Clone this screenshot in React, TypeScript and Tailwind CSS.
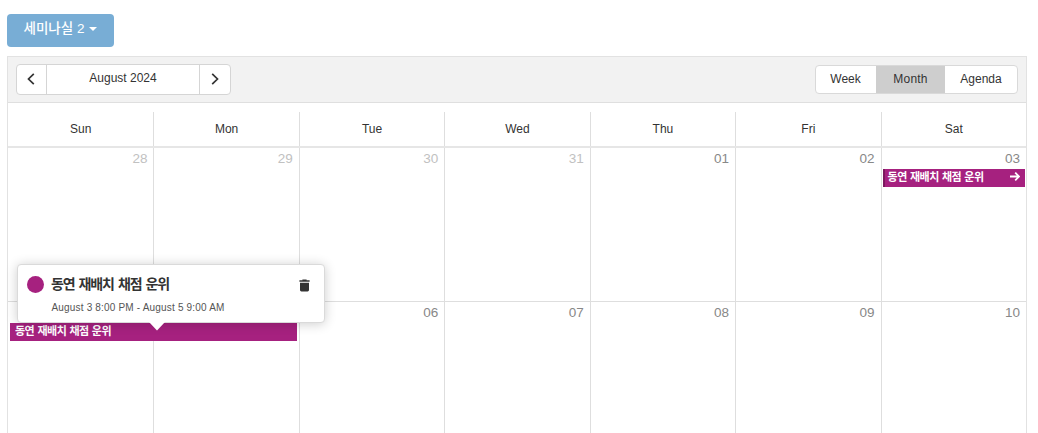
import clsx from "clsx"

type Day = { label: string; outside?: boolean; covered?: boolean }

const weekdays = ["Sun", "Mon", "Tue", "Wed", "Thu", "Fri", "Sat"]

const weeks: Day[][] = [
  [
    { label: "28", outside: true },
    { label: "29", outside: true },
    { label: "30", outside: true },
    { label: "31", outside: true },
    { label: "01" },
    { label: "02" },
    { label: "03" },
  ],
  [
    { label: "04", covered: true },
    { label: "05", covered: true },
    { label: "06" },
    { label: "07" },
    { label: "08" },
    { label: "09" },
    { label: "10" },
  ],
]

const EVENT_TITLE = "동연 재배치 채점 운위"

function Chevron({ direction }: { direction: "left" | "right" }) {
  return (
    <svg width="8" height="12" viewBox="0 0 8 12" fill="none" stroke="#333" strokeWidth="1.7">
      <path d={direction === "left" ? "M6.8 0.8L1.5 6l5.3 5.2" : "M1.2 0.8L6.5 6l-5.3 5.2"} />
    </svg>
  )
}

function Toolbar() {
  return (
    <div className="flex h-[46px] items-center justify-between border-b border-[#dfdfdf] bg-[#f2f2f2] px-2 text-[12px] text-[#333]">
      <div className="flex h-[31px] w-[215px] rounded-[4px] border border-[#d5d5d5] bg-white">
        <button className="flex w-[29px] items-center justify-center pb-px pr-[2px]">
          <Chevron direction="left" />
        </button>
        <div className="flex flex-1 items-center justify-center border-x border-[#d5d5d5] pb-[3px]">August 2024</div>
        <button className="flex w-[30px] items-center justify-center pb-px">
          <Chevron direction="right" />
        </button>
      </div>

      <div className="flex h-[29px] w-[203px] rounded-[4px] border border-[#d9d9d9] bg-white">
        <button className="w-[60px] pb-px pr-px">Week</button>
        <button className="w-[69px] bg-[#cecece] pb-px tracking-[0.2px]">Month</button>
        <button className="flex-1 pb-px">Agenda</button>
      </div>
    </div>
  )
}

function EventBar({ className, continues }: { className: string; continues?: boolean }) {
  return (
    <div
      className={clsx(
        "relative flex h-[18px] items-center justify-between bg-[#a6217f] text-[11px] font-bold tracking-[-0.5px] [word-spacing:0.6px] text-white",
        className
      )}
    >
      <span className="whitespace-nowrap pb-[2px]">{EVENT_TITLE}</span>
      {continues && (
        <svg className="mr-[5px] mb-[3px]" width="10" height="9" viewBox="0 0 10 9" fill="none" stroke="white" strokeWidth="1.8">
          <path d="M0 4.5h9M5.2 0.6l3.9 3.9-3.9 3.9" />
        </svg>
      )}
    </div>
  )
}

function EventPopup() {
  return (
    <div className="absolute left-[17px] top-[264px] z-20 h-[59px] w-[308px] rounded-[4px] border border-[#dadada] bg-white shadow-[0_1px_12px_rgba(0,0,0,0.2)]">
      <div className="flex h-[38px] items-center pl-[9px] pr-[14px]">
        <span className="h-[17px] w-[17px] rounded-full bg-[#a6217f]" />
        <h2 className="ml-[7px] flex-1 text-[14px] font-bold tracking-[-1.15px] [word-spacing:1.4px] text-[#333]">
          {EVENT_TITLE}
        </h2>
        <svg className="mt-[3px]" width="11" height="13" viewBox="0 0 11 13" fill="#333">
          <path d="M3.4 0.5h4.2v0.8h3v1.4H0.4V1.3h3zM1 3.7h9v7.4a1.4 1.4 0 0 1-1.4 1.4H2.4A1.4 1.4 0 0 1 1 11.1z" />
        </svg>
      </div>
      <p className="pl-[33.5px] text-[10px] leading-[10px] tracking-[0.18px] text-[#555]">
        August 3 8:00 PM - August 5 9:00 AM
      </p>
      <svg className="absolute left-[131px] top-[57px]" width="16" height="9" viewBox="0 0 16 9" fill="white">
        <path d="M0 0h16L8 8.5z" />
      </svg>
    </div>
  )
}

export default function App() {
  return (
    <div className="relative h-[433px] w-[1038px] overflow-hidden bg-white pl-[7px] pr-[11px] pt-[14px] font-['Liberation_Sans','Noto_Sans_CJK_KR',sans-serif]">
      <button className="flex h-[33px] w-[107px] items-center justify-center rounded-[4px] bg-[#78add5] pb-[3px] text-[13.5px] font-medium text-white">
        세미나실 2
        <span className="ml-[5px] border-x-4 border-t-4 border-x-transparent border-t-white" />
      </button>

      <div className="mt-[9px] h-[400px] border border-[#e2e2e2]">
        <Toolbar />

        <div className="grid h-[45px] grid-cols-7 border-b-2 border-[#e6e6e6] pt-[9px] text-[12px] text-[#333]">
          {weekdays.map((day, i) => (
            <div key={day} className={clsx("flex items-center justify-center", i > 0 && "border-l border-[#dedede]")}>
              {day}
            </div>
          ))}
        </div>

        {weeks.map((week, row) => (
          <div key={row} className="grid h-[154px] grid-cols-7 border-b border-[#dedede]">
            {week.map((day, i) => (
              <div key={day.label} className={clsx("min-w-0", i > 0 && "border-l border-[#dedede]")}>
                <div
                  className={clsx(
                    "h-[21px] pr-[6px] pt-px text-right text-[13.5px] leading-5",
                    day.outside ? "text-[#c1c1c1]" : "text-[#888]"
                  )}
                >
                  {!day.covered && day.label}
                </div>
                {day.label === "03" && (
                  <EventBar continues className="ml-px mr-px border-l-2 border-[#7c195f] pl-[3px]" />
                )}
                {day.label === "04" && <EventBar className="z-10 ml-[2px] w-[287px] pl-[5px]" />}
              </div>
            ))}
          </div>
        ))}
      </div>

      <EventPopup />
    </div>
  )
}
